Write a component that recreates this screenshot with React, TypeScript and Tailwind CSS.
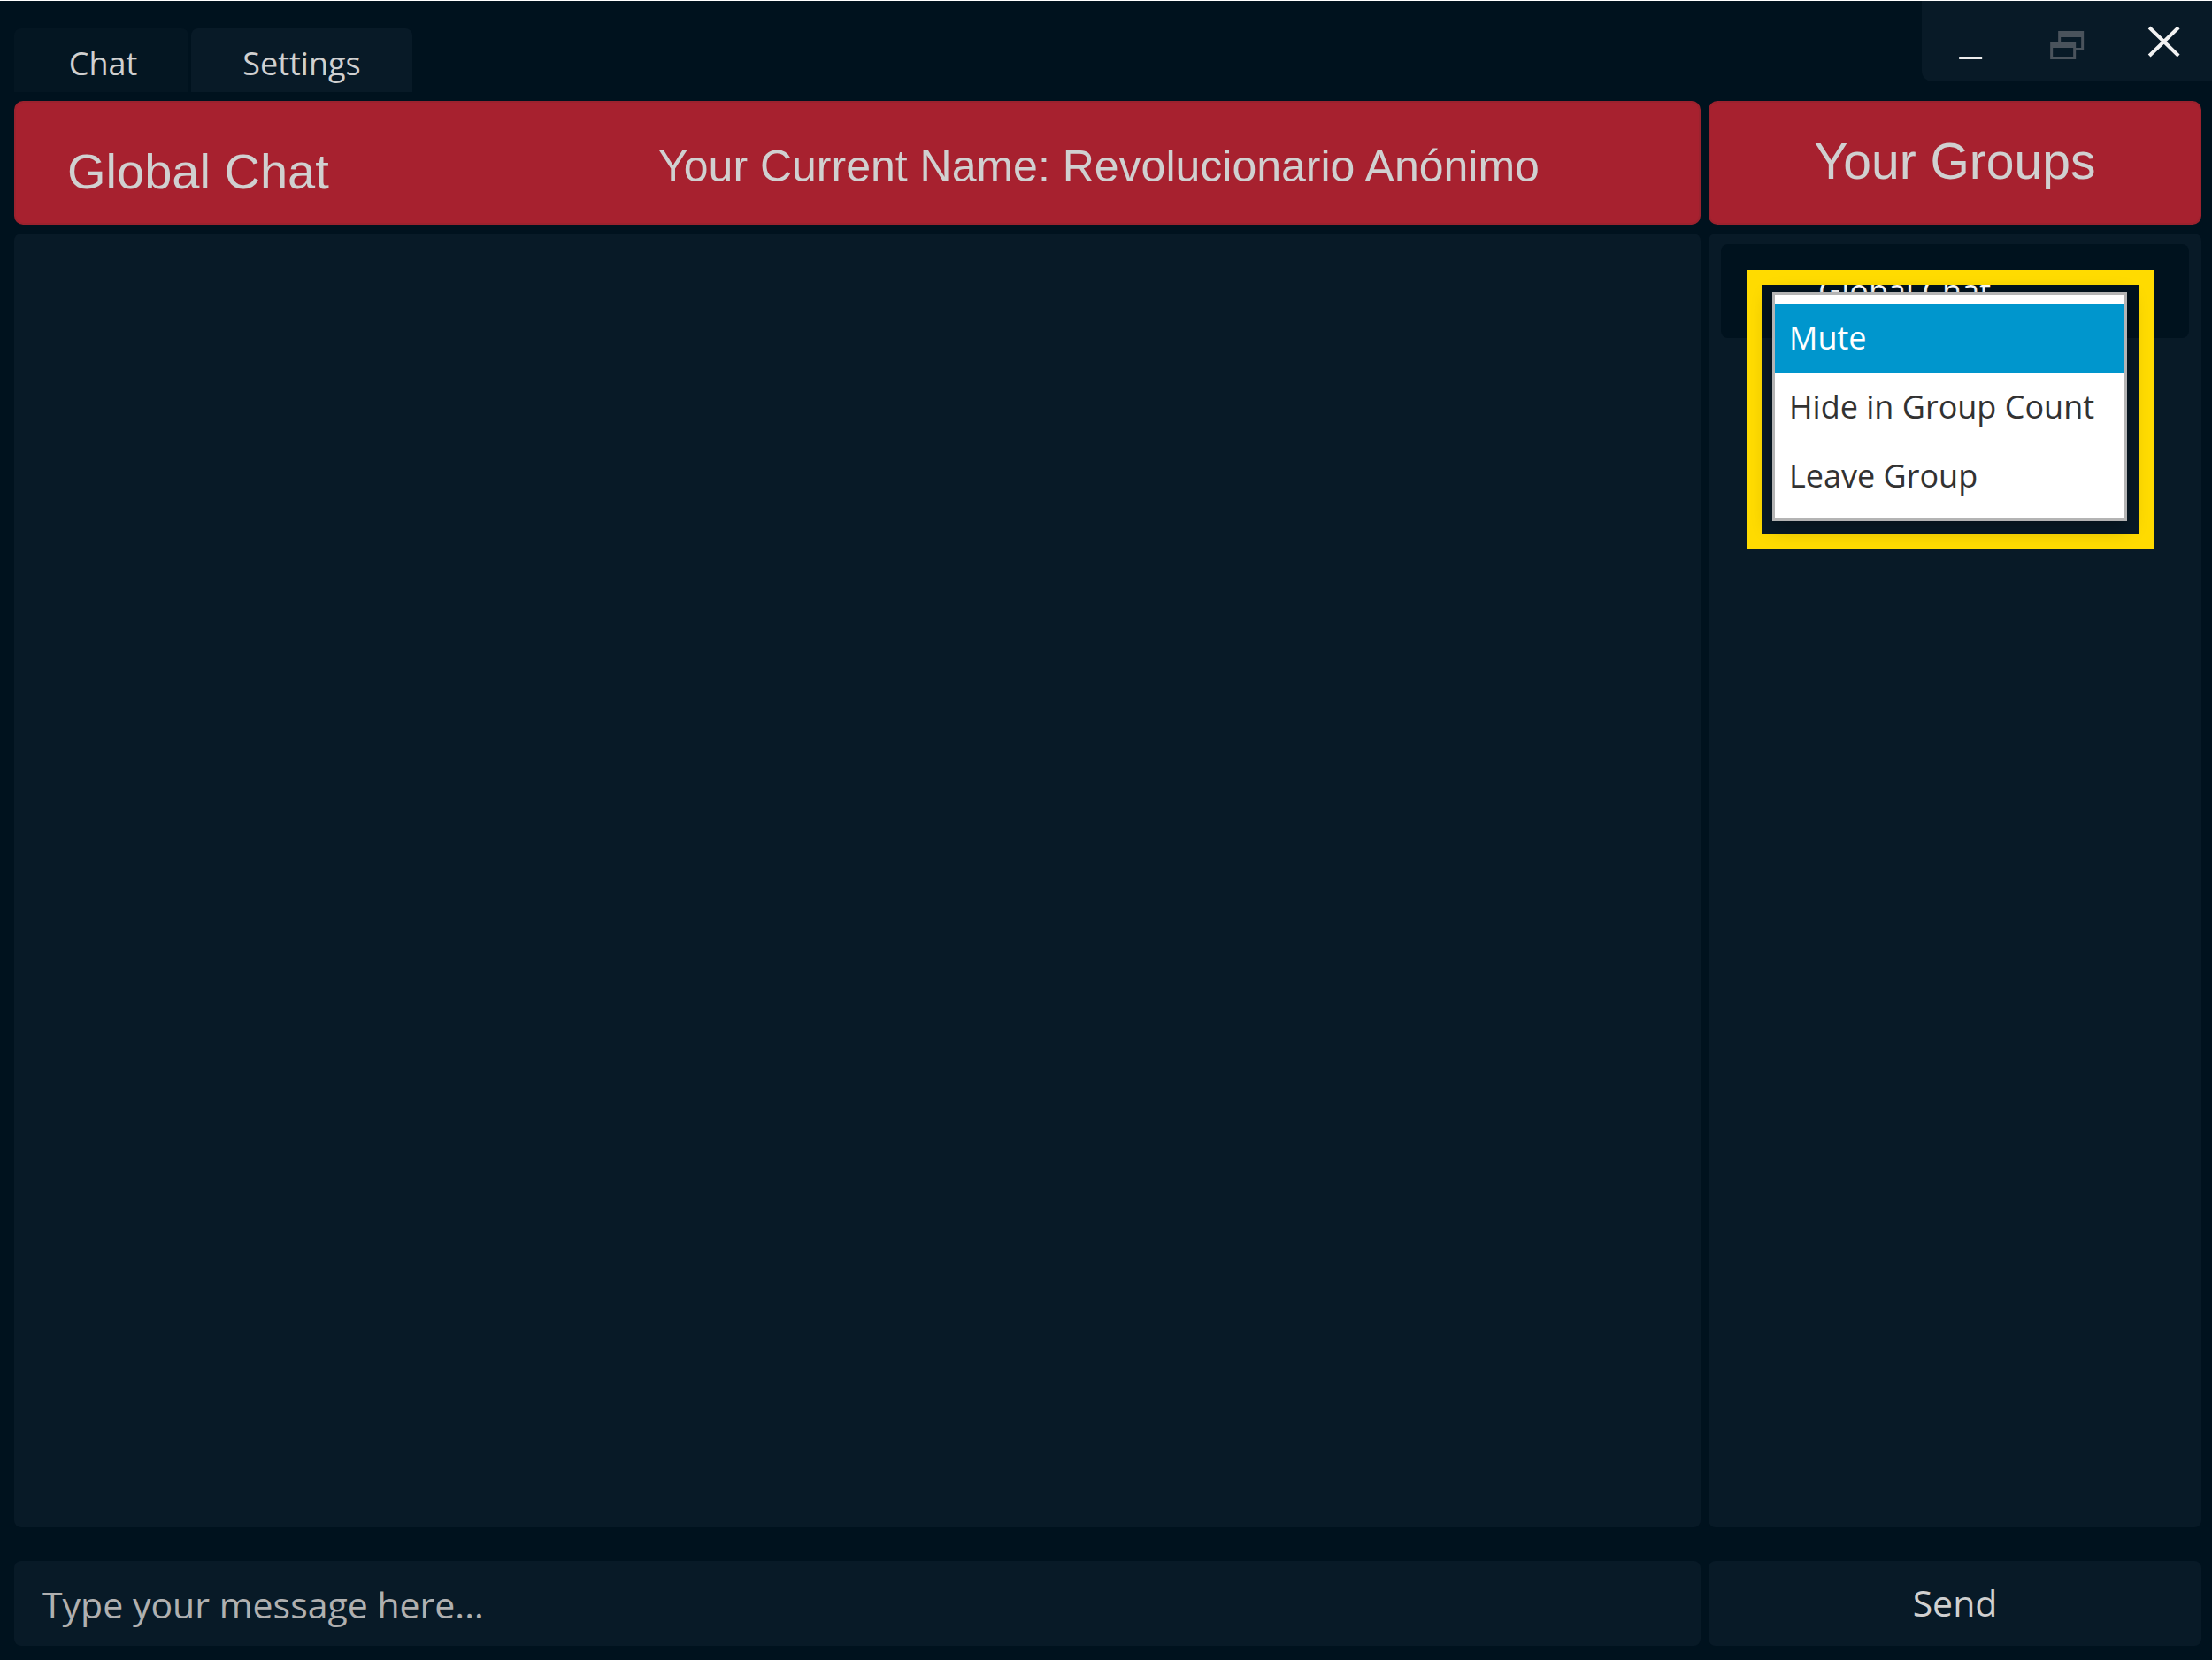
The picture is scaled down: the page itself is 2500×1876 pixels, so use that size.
import React from "react";

const tabs = [
  { label: "Chat", className: "w-[197px] bg-[#041622] pl-1" },
  { label: "Settings", className: "w-[250px] bg-[#081a27]" },
];

const menuItems = ["Mute", "Hide in Group Count", "Leave Group"];

function WindowControls() {
  return (
    <div className="flex h-[91px] w-[328px] rounded-bl-xl bg-[#081a27]">
      <button aria-label="Minimize" className="flex-1">
        <svg viewBox="0 0 109 91" className="h-full w-full">
          <rect x="42" y="63" width="26" height="3" fill="#ececec" />
        </svg>
      </button>
      <button aria-label="Restore" className="flex-1" disabled>
        <svg viewBox="0 0 109 91" className="h-full w-full" fill="#4a535c">
          <path d="M45 34h29v22H64v-3h7V41H48v6h-3z" />
          <path fillRule="evenodd" d="M36 47h29v19H36zM39 53v10h23V53z" />
        </svg>
      </button>
      <button aria-label="Close" className="flex-1">
        <svg viewBox="0 0 109 91" className="h-full w-full">
          <path d="M38 30L71 62M71 30L38 62" stroke="#f2f2f2" strokeWidth="4" fill="none" />
        </svg>
      </button>
    </div>
  );
}

function ContextMenu() {
  return (
    <div className="absolute top-[29px] left-[30px] w-[459px] border-[16px] border-y-[17px] border-[#ffdb00] pt-2 pr-[14px] pb-[15px] pl-3">
      <ul
        role="menu"
        className="border-[3px] border-b-4 border-[#b4b4b4] bg-white pt-[10px] pb-2 shadow-[0_6px_20px_rgba(0,0,0,0.35)]"
      >
        {menuItems.map((item, i) => (
          <li key={item} role="none">
            <button
              role="menuitem"
              className={
                i === 0
                  ? "flex h-[78px] w-full items-center bg-[#0096cd] px-4 text-[36px] text-white"
                  : "flex h-[78px] w-full items-center px-4 text-[36px] text-[#323232]"
              }
            >
              {item}
            </button>
          </li>
        ))}
      </ul>
    </div>
  );
}

export default function App() {
  return (
    <div className="flex min-h-screen flex-col border-t border-white bg-[#00121e] pb-4 font-['Open_Sans',sans-serif] text-[#d0d0d0]">
      <header className="flex h-[113px] items-start justify-between pl-4">
        <nav className="flex gap-[3px] pt-[31px]">
          {tabs.map((tab) => (
            <button
              key={tab.label}
              className={`h-[72px] rounded-t-lg pt-2 text-[36px] leading-[64px] ${tab.className}`}
            >
              {tab.label}
            </button>
          ))}
        </nav>
        <WindowControls />
      </header>

      <div className="grid flex-1 grid-cols-[minmax(0,1fr)_557px] grid-rows-[140px_minmax(0,1fr)_96px] gap-x-[9px] pr-3 pl-4">
        <section className="flex items-center rounded-[10px] border-2 border-[#9b222e] bg-[#a7212f] px-[58px] font-['Liberation_Sans',sans-serif]">
          <h1 className="w-[668px] pt-5 text-[56px] leading-[64px]">Global Chat</h1>
          <p className="pt-2 text-[50px] leading-[56px] whitespace-nowrap">
            Your Current Name: Revolucionario Anónimo
          </p>
        </section>
        <section className="flex items-center justify-center rounded-[10px] border-2 border-[#9b222e] bg-[#a7212f] pb-1 font-['Liberation_Sans',sans-serif]">
          <h2 className="text-[57px] leading-[64px]">Your Groups</h2>
        </section>

        <main className="mt-[10px] mb-[38px] rounded-lg bg-[#081a27]" />
        <aside className="mt-[10px] mb-[38px] rounded-lg bg-[#081a27] px-[14px] pt-3">
          <div className="relative h-[106px] rounded-lg bg-[#00121e]">
            <button className="flex h-full w-full items-center pl-[110px] text-[36px] text-white">
              Global Chat
            </button>
            <ContextMenu />
          </div>
        </aside>

        <input
          aria-label="Message"
          placeholder="Type your message here..."
          className="rounded-lg bg-[#081a27] px-8 pt-1 text-[41px] outline-none placeholder:text-[#b0b0b0] placeholder:opacity-100"
        />
        <button className="rounded-lg bg-[#081a27] text-[41px]">Send</button>
      </div>
    </div>
  );
}
